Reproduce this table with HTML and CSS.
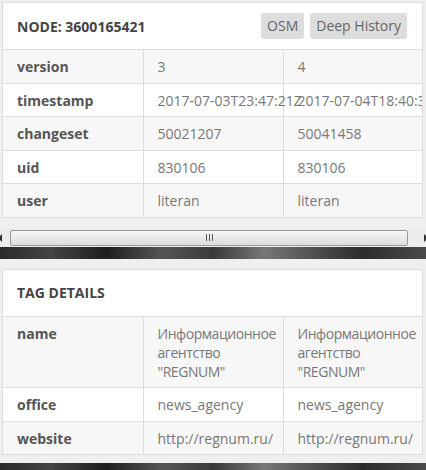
FILE: index.html
```html
<!DOCTYPE html>
<html lang="en">
<head>
    <meta charset="UTF-8">
    <title>Node 3600165421</title>
    <link rel="stylesheet" href="styles.css">
</head>
<body>
    <!-- Node history -->
    <section class="panel">
        <div class="panel-head">
            <h2>NODE: 3600165421</h2>
            <div class="actions">
                <span class="btn">OSM</span>
                <span class="btn">Deep History</span>
            </div>
        </div>
        <table class="grid nowrap">
            <tr><th>version</th><td>3</td><td>4</td></tr>
            <tr><th>timestamp</th><td>2017-07-03T23:47:21Z</td><td>2017-07-04T18:40:35Z</td></tr>
            <tr><th>changeset</th><td>50021207</td><td>50041458</td></tr>
            <tr><th>uid</th><td>830106</td><td>830106</td></tr>
            <tr><th>user</th><td>literan</td><td>literan</td></tr>
        </table>
    </section>

    <!-- Fake horizontal scrollbar -->
    <div class="hscroll">
        <span class="arrow left"></span>
        <div class="thumb"><span class="grip"></span></div>
        <span class="arrow right"></span>
    </div>

    <div class="map-strip"></div>

    <!-- Tags -->
    <section class="panel tags">
        <div class="panel-head">
            <h2>TAG DETAILS</h2>
        </div>
        <table class="grid">
            <tr><th>name</th><td class="long">Информационное агентство "REGNUM"</td><td class="long">Информационное агентство "REGNUM"</td></tr>
            <tr><th>office</th><td>news_agency</td><td>news_agency</td></tr>
            <tr><th>website</th><td>http://regnum.ru/</td><td>http://regnum.ru/</td></tr>
        </table>
    </section>

    <div class="map-strip bottom"></div>
</body>
</html>
```

FILE: styles.css
```css
* {
    margin: 0;
    padding: 0;
    box-sizing: border-box;
}

body {
    font-family: 'Open Sans', 'Noto Sans', sans-serif;
    font-size: 14px;
    color: #777;
    background: #efefef;
    padding-top: 2px;
    overflow: hidden;
}

.panel {
    margin: 0 3px 0 2px;
    background: #fff;
    border: 1px solid #ddd;
    overflow: hidden;
}

.panel.tags {
    margin-top: 2px;
}

.panel-head {
    height: 47px;
    padding: 0 14px;
    display: flex;
    align-items: center;
    justify-content: space-between;
    border-bottom: 1px solid #ddd;
}

.panel-head h2 {
    font-size: 14px;
    font-weight: 700;
    color: #444;
}

.actions {
    display: flex;
    gap: 6px;
    margin-right: 1px;
}

.btn {
    background: #ddd;
    color: #666;
    border-radius: 3px;
    padding: 0 6px;
    line-height: 26px;
    height: 26px;
}

.grid {
    width: 420px;
    table-layout: fixed;
    border-collapse: collapse;
}

.grid th,
.grid td {
    width: 140px;
    text-align: left;
    vertical-align: top;
    line-height: 19px;
    padding: 7px 14px 6.5px;
    border-top: 1px solid #ddd;
    border-left: 1px solid #ddd;
}

.grid.nowrap td {
    white-space: nowrap;
}

.grid td.long {
    letter-spacing: -0.45px;
}

.grid tr:first-child th,
.grid tr:first-child td {
    border-top: none;
}

.grid th {
    border-left: none;
    font-weight: 700;
    color: #555;
}

.grid tr:nth-child(odd) {
    background: #f7f7f7;
}

.hscroll {
    margin-top: 11px;
    height: 18px;
    display: flex;
    align-items: center;
    background: #ececec;
}

.arrow {
    width: 0;
    height: 0;
    border-top: 4px solid transparent;
    border-bottom: 4px solid transparent;
}

.arrow.left {
    margin: 0 6px 0 0;
    border-right: 4px solid #333;
    transform: translateX(-2px);
}

.arrow.right {
    margin-left: auto;
    margin-right: -2px;
    border-left: 4px solid #333;
}

.thumb {
    width: 398px;
    height: 16px;
    border: 1px solid #9a9a9a;
    border-radius: 2px;
    background: linear-gradient(#f6f6f6, #dcdcdc);
    display: flex;
    justify-content: center;
    align-items: center;
}

.grip {
    width: 7px;
    height: 7px;
    background: repeating-linear-gradient(90deg, #555 0 1px, transparent 1px 3px);
}

.map-strip {
    height: 12px;
    margin-bottom: 10px;
    background: linear-gradient(90deg, #2a2a2a 0%, #444 12%, #1e1e1e 25%, #555 38%, #3a3a3a 50%, #777 62%, #555 72%, #2c2c2c 85%, #4a4a4a 100%);
}

.map-strip.bottom {
    margin-top: 8px;
    height: 8px;
    margin-bottom: 0;
}
```
